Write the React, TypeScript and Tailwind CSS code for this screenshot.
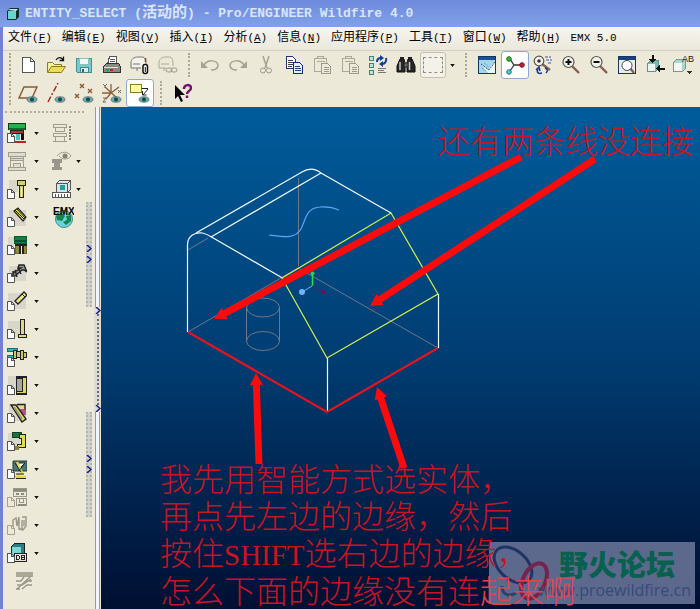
import React from 'react';

interface MenuItem {
  label: string;
  hotkey?: string;
}

interface Tool {
  name: string;
  icon: React.ReactNode;
  active?: boolean;
}

interface PartTool {
  name: string;
  icon: React.ReactNode;
  menu?: boolean;
  side?: Tool & { menu?: boolean };
}

const menus: MenuItem[] = [
  { label: '文件', hotkey: 'F' },
  { label: '编辑', hotkey: 'E' },
  { label: '视图', hotkey: 'V' },
  { label: '插入', hotkey: 'I' },
  { label: '分析', hotkey: 'A' },
  { label: '信息', hotkey: 'N' },
  { label: '应用程序', hotkey: 'P' },
  { label: '工具', hotkey: 'T' },
  { label: '窗口', hotkey: 'W' },
  { label: '帮助', hotkey: 'H' },
  { label: 'EMX 5.0' },
];

const Icon: React.FC<{ children: React.ReactNode; smooth?: boolean }> = ({ children, smooth }) => (
  <svg
    viewBox="0 0 20 20"
    className="w-5 h-5 shrink-0"
    fill="none"
    stroke="#222"
    shapeRendering={smooth ? 'auto' : 'crispEdges'}
  >
    {children}
  </svg>
);

// Little page in the lower left corner of most part tools
const Doc: React.FC<{ gray?: boolean }> = ({ gray }) => (
  <path d="M.5 10.5h4l3 3v6h-7zM4.5 10.5v3h3" fill={gray ? '#ece9d8' : '#fff'} stroke={gray ? '#a5a394' : '#555'} />
);

const Eye = () => (
  <g shapeRendering="auto">
    <ellipse cx="14" cy="16.5" rx="5" ry="2.8" fill="#74a8a4" stroke="#456" strokeWidth=".6" />
    <circle cx="14" cy="16.5" r="2" fill="#064c50" stroke="none" />
  </g>
);

const Magnifier: React.FC<{ sign: string }> = ({ sign }) => (
  <Icon smooth>
    <path d="M11 11l7 7" stroke="#8a5f52" strokeWidth="2.4" />
    <circle cx="7.5" cy="7" r="5.5" fill="#f4f3ea" stroke="#555" strokeWidth="1.2" />
    <path d={sign} stroke="#111" strokeWidth="2" />
  </Icon>
);

const Paste = () => (
  <Icon>
    <path d="M2.5 3.5h12v13h-12zM5.5 3.5v-2h6v2zM4.5 6.5h8" stroke="#aaa899" />
    <path d="M9.5 8.5h6l3 3v7h-9zM11.5 12.5h5M11.5 14.5h5M11.5 16.5h5" fill="#ece9d8" stroke="#9c9a8c" />
  </Icon>
);

const fileTools: Tool[] = [
  {
    name: '新建',
    icon: <Icon><path d="M4.5 2.5h8l4 4v11h-12zM12.5 2.5v4h4" fill="#fff" stroke="#555" /></Icon>,
  },
  {
    name: '打开',
    icon: (
      <Icon smooth>
        <path d="M1.5 17V7.5h5l2 2h7V12" fill="#f5ef9a" stroke="#8a7c20" />
        <path d="M1.5 17.5l4-6h14l-4 6z" fill="#ecdc58" stroke="#8a7c20" />
        <path d="M10 5c2-3 5-3 7-.5M17.5 1.5v4h-4" stroke="#111" strokeWidth="1.3" />
      </Icon>
    ),
  },
  {
    name: '保存',
    icon: (
      <Icon>
        <path d="M2.5 3.5h15v14h-14l-1-1z" fill="#6fd0ca" stroke="#4a8f92" />
        <path d="M5.5 3.5h9v6h-9z" fill="#eefaf6" stroke="#8fbfbb" />
        <path d="M6.5 12.5h8v5h-8z" fill="#dcece8" stroke="#4c8589" />
        <path d="M8.5 14v3" stroke="#35666a" strokeWidth="2" />
      </Icon>
    ),
  },
  {
    name: '打印',
    icon: (
      <Icon>
        <path d="M5.5 9.5l2-8h7v8M8 4.5h5M8 6.5h5" fill="#fff" stroke="#555" />
        <path d="M1.5 11.5l3-3h12l2 3v6h-17z" fill="#8a8a82" stroke="#333" />
        <path d="M2 12.5h14" stroke="#ddd" />
        <path d="M4 15h3" stroke="#1c9c54" strokeWidth="2" />
        <path d="M8 15h3" stroke="#b42828" strokeWidth="2" />
      </Icon>
    ),
  },
  {
    name: '发送',
    icon: (
      <Icon smooth>
        <path d="M1 13V8c0-4 3-6 7-6h4c3 0 4 3 4 6v3" fill="#f4f3ea" stroke="#777" />
        <path d="M1 13h10M3 9h7M7 13v3" stroke="#777" />
        <path d="M15.5 3v4" stroke="#b03030" strokeWidth="1.5" />
        <rect x="13" y="9.5" width="4.5" height="9" rx="2" fill="#fff" stroke="#111" strokeWidth="1.5" />
        <path d="M15.3 12v5" stroke="#111" />
      </Icon>
    ),
  },
  {
    name: '链接',
    icon: (
      <Icon smooth>
        <path d="M1 13V8c0-4 3-6 7-6h3c3 0 4 3 4 6v3M1 13h7M3 9h8M6 13v3" stroke="#aaa899" />
        <rect x="8" y="13" width="6" height="4" rx="2" stroke="#9c9a8c" />
        <rect x="13" y="13" width="6" height="4" rx="2" stroke="#9c9a8c" />
      </Icon>
    ),
  },
];

const editTools: Tool[] = [
  {
    name: '撤消',
    icon: (
      <Icon smooth>
        <path d="M1 6v7h7z" fill="#a5a394" stroke="none" />
        <path d="M4 10c4-6 13-5 14 0 0 4-3 5-7 5" stroke="#a5a394" strokeWidth="1.5" />
      </Icon>
    ),
  },
  {
    name: '重做',
    icon: (
      <Icon smooth>
        <path d="M19 6v7h-7z" fill="#a5a394" stroke="none" />
        <path d="M16 10C12 4 3 5 2 10c0 4 3 5 7 5" stroke="#a5a394" strokeWidth="1.5" />
      </Icon>
    ),
  },
  {
    name: '剪切',
    icon: (
      <Icon smooth>
        <path d="M7 1l4 12M13 1L9 13" stroke="#a5a394" strokeWidth="1.5" />
        <circle cx="7" cy="15.5" r="2.5" stroke="#9c9a8c" />
        <circle cx="13" cy="15.5" r="2.5" stroke="#9c9a8c" />
      </Icon>
    ),
  },
  {
    name: '复制',
    icon: (
      <Icon>
        <path d="M2.5 1.5h6l3 3v9h-9z" fill="#fff" stroke="#26346a" />
        <path d="M4 5.5h5M4 7.5h5M4 9.5h5M4 11.5h4" stroke="#444" />
        <path d="M9.5 7.5h6l3 3v8h-9z" fill="#e5f0ff" stroke="#102c80" />
        <path d="M11 11.5h5M11 13.5h6M11 15.5h6" stroke="#26427c" />
      </Icon>
    ),
  },
  { name: '粘贴', icon: <Paste /> },
  { name: '选择性粘贴', icon: <Paste /> },
  {
    name: '再生',
    icon: (
      <Icon>
        <path d="M1.5 1.5h4v4h-4zM1.5 8.5h4v4h-4zM1.5 15.5h4v4h-4z" fill="#b9e5df" stroke="#3b8582" />
        <path d="M10 13.5h8M10 15.5h6M10 17.5h8" stroke="#777" />
        <g shapeRendering="auto" stroke="#123f94" strokeWidth="2">
          <path d="M9 7c0-3 2-4 4-4M18 3c1 3-1 6-4 6" />
          <path d="M12 0l4 3-4 3zM15 6l-4 3 4 3z" fill="#123f94" strokeWidth="0" />
        </g>
      </Icon>
    ),
  },
  {
    name: '查找',
    icon: (
      <Icon smooth>
        <path d="M4 4h4l1 4v9H1v-6zM12 4h4l3 7v6h-8V8z" fill="#272727" stroke="#111" />
        <path d="M8 8h4v4H8z" fill="#666" />
        <path d="M4 7v8M13.5 7v8" stroke="#c9c9c9" strokeWidth="1.5" />
        <path d="M4 3h4M12 3h4" strokeWidth="2" />
      </Icon>
    ),
  },
];

const viewTools: Tool[] = [
  {
    name: '重画',
    icon: (
      <Icon>
        <path d="M1.5 1.5h17v17h-17z" fill="#a5d3f0" stroke="#173364" />
        <path d="M2 3.5h16" stroke="#1b4fa3" strokeWidth="3" />
        <path d="M4 9l7 6 7-9v12H11z" fill="#eef8fb" stroke="none" />
        <g shapeRendering="auto">
          <path d="M4 9l8 6 6-8" stroke="#33566c" strokeDasharray="2 1" />
          <path d="M7 8l5 4M5 13l4 3" stroke="#5d8aa5" strokeDasharray="1 1" />
        </g>
      </Icon>
    ),
  },
  {
    name: '旋转中心',
    active: true,
    icon: (
      <Icon smooth>
        <path d="M5 4l4 6h8M9 10l-4 6" stroke="#333" strokeWidth="1.3" />
        <circle cx="4" cy="4" r="2.3" fill="#32bd31" stroke="#176b20" />
        <circle cx="17" cy="10" r="2.3" fill="#c51b38" stroke="#781626" />
        <circle cx="4" cy="17" r="2.3" fill="#42d3db" stroke="#21747f" />
      </Icon>
    ),
  },
  {
    name: '定向模式',
    icon: (
      <Icon smooth>
        <path d="M9 9l8 6" stroke="#80645c" strokeWidth="2.5" />
        <circle cx="6" cy="6" r="4.8" fill="#f5f3e9" stroke="#555" strokeWidth="1.2" />
        <circle cx="6" cy="6" r="1.8" fill="#333" stroke="none" />
        <path d="M12 2h6M13 5h6M15 8h4" stroke="#3d55a2" strokeDasharray="3 1" />
        <path d="M5 14c-2 4 1 5 4 4M3 15l3-3 1 4M12 13c3 1 3 3 1 5" stroke="#183d92" strokeWidth="1.5" />
      </Icon>
    ),
  },
  { name: '放大', icon: <Magnifier sign="M4.500 7h6M7.500 4v6" /> },
  { name: '缩小', icon: <Magnifier sign="M4.500 7h6" /> },
  {
    name: '重新调整',
    icon: (
      <Icon>
        <path d="M1.5 1.5h17v17h-17z" fill="#e8edf0" stroke="#173364" />
        <path d="M2 3h16" stroke="#173f85" strokeWidth="3" />
        <g shapeRendering="auto">
          <path d="M13 13l4 5" stroke="#805b50" strokeWidth="2.2" />
          <circle cx="10" cy="10.5" r="5" fill="#fff" stroke="#444" />
        </g>
      </Icon>
    ),
  },
  {
    name: '重定向',
    icon: (
      <Icon>
        <path d="M2.5 8.5l3-3h8v8l-3 3h-8z" fill="#70bdb4" stroke="#678f8b" />
        <path d="M3 9h7v7H3z" fill="#eaf5ef" stroke="none" />
        <path d="M7.5 0v6M20 13.5h-6" strokeWidth="2" stroke="#111" />
        <path d="M4 4h7l-3.500 4zM15 10v7l-4-3.500z" fill="#111" stroke="none" />
      </Icon>
    ),
  },
  {
    name: '已命名的视图列表',
    icon: (
      <svg viewBox="0 0 22 20" className="w-[22px] h-5 shrink-0" fill="none" shapeRendering="crispEdges">
        <path d="M1.5 7.500l3-3h9v9l-3 3h-9z" fill="#a9d6cf" stroke="#7b9492" />
        <path d="M2 8h8v8H2z" fill="#f4f6ef" />
        <text x="10" y="7" fontSize="9" fill="#222" className="font-['Liberation_Sans']">AB</text>
        <path d="M15 16h5l-2.500 3z" fill="#333" />
      </svg>
    ),
  },
];

const datumTools: Tool[] = [
  {
    name: '基准平面',
    icon: <Icon smooth><path d="M1 15L6 4h13l-5 11z" stroke="#8b5b34" strokeWidth="1.5" /><Eye /></Icon>,
  },
  {
    name: '基准轴',
    icon: <Icon smooth><path d="M2 19L12 0" stroke="#a23024" strokeWidth="1.5" strokeDasharray="6 2 2 2" /><Eye /></Icon>,
  },
  {
    name: '基准点',
    icon: (
      <Icon smooth>
        <path d="M6 1l4 4m0-4L6 5M14 6l4 4m0-4l-4 4M1 11l4 4m0-4l-4 4" stroke="#8b5b34" strokeWidth="1.4" />
        <Eye />
      </Icon>
    ),
  },
  {
    name: '坐标系',
    icon: (
      <Icon smooth>
        <path d="M9 10V1M9 10H0M9 10l8-6M3 4l12 11M4 16l5-6" stroke="#8b6038" strokeWidth="1.3" />
        <path d="M1 1l2 2 2-2M3 3v2M16 7l3 3m0-3l-3 3M1 15h3l-3 4h3" stroke="#666" />
        <Eye />
      </Icon>
    ),
  },
  {
    name: '注释显示',
    active: true,
    icon: (
      <Icon>
        <path d="M.5 1.500h11v8H.5z" fill="#ffff9d" stroke="#877d21" />
        <path d="M12 5.500h6" stroke="#222" />
        <path d="M18 6l-5 6M12.500 8v4h4" stroke="#222" shapeRendering="auto" />
        <Eye />
      </Icon>
    ),
  },
];

const Mold: React.FC<{ gray?: boolean }> = ({ gray }) =>
  gray ? (
    <Icon>
      <path d="M1.5 1.500h17v4h-17zM3.500 5.500h13v4h-13zM3.500 9.500v7M16.500 9.500v7M6.500 12.500h7v4h-7zM1.500 16.500h17v3h-17z" fill="#dedccf" stroke="#a09e90" />
      <path d="M3 7.500h14" stroke="#a09e90" />
    </Icon>
  ) : (
    <Icon>
      <path d="M1.5.5h17v6h-17z" fill="#22b14c" stroke="#123d1c" />
      <path d="M2 5.500h16" stroke="#0b6b34" strokeWidth="2" />
      <path d="M3.500 7.500h13v3h-13z" fill="#b8352e" stroke="#222" />
      <path d="M9 11h4v6H9z" fill="#45c4c4" stroke="none" />
      <path d="M14 11h3v6h-3z" fill="#111" stroke="none" />
      <path d="M7 18.500h12" stroke="#b02a29" strokeWidth="2" />
      <Doc />
    </Icon>
  );

const partTools: PartTool[] = [
  {
    name: '模架装配',
    menu: true,
    icon: <Mold />,
    side: {
      name: '模架开合',
      icon: (
        <Icon>
          <path d="M1.5 1.500h13v3h-13zM3.500 5v3h9v-3M1.500 10.500h13v3h-13zM3.500 14v4h9v-4M1 18.500h14" stroke="#a09e90" />
          <path d="M17.500 3v14" stroke="#88867b" strokeWidth="2" strokeDasharray="2 1" />
        </Icon>
      ),
    },
  },
  {
    name: '模架定义',
    menu: true,
    icon: <Mold gray />,
    side: {
      name: '显示状态',
      menu: true,
      icon: (
        <Icon smooth>
          <path d="M5 5c4-5 11-5 14 0-3 4-9 4-12 0" stroke="#a09e90" />
          <circle cx="13" cy="5" r="2.500" fill="#858477" stroke="none" />
          <path d="M0 8h10v4H8v4h2v3H0v-3h2v-4H0z" fill="#99978a" stroke="none" />
        </Icon>
      ),
    },
  },
  {
    name: '螺钉',
    menu: true,
    icon: (
      <Icon>
        <path d="M2 1h9v12H2z" fill="#d8d6ca" stroke="none" />
        <path d="M10.500 1.500h8v5h-8zM12.500 6.500h4v12h-4z" fill="#d5cf70" />
        <path d="M14.500 8v10" stroke="#fff27b" />
        <Doc />
      </Icon>
    ),
    side: {
      name: '测量',
      menu: true,
      icon: (
        <Icon>
          <path d="M4.500 4.500l3-3h11v9l-3 3h-11zM4.500 4.500h11v9M15.500 4.500l3-3" fill="#d7e4e0" stroke="#555" />
          <path d="M8 6h5v5H8z" fill="#279b9f" stroke="none" />
          <path d="M.5 13.500h18v5H.5zM3.500 15v3M6.500 15v3M9.500 15v3M12.500 15v3M15.500 15v3" fill="#fff" stroke="#555" />
        </Icon>
      ),
    },
  },
  {
    name: '销钉',
    menu: true,
    icon: (
      <Icon smooth>
        <path d="M2 3h17v16H2z" fill="#d8d6ca" stroke="none" />
        <path d="M7 4l4-3 8 9-3 4z" fill="#e6dd62" strokeWidth="1.2" />
        <path d="M8 3l9 9M10 2l8 9" />
        <Doc />
      </Icon>
    ),
    side: {
      name: 'EMX',
      icon: (
        <svg viewBox="0 0 22 22" className="w-[22px] h-[22px] shrink-0">
          <circle cx="12" cy="13" r="8.500" fill="#69d4d6" stroke="#42898f" />
          <path d="M4 10l5-3 4 3-3 5-5-1zM14 10l5-1v6l-5 4-3-3 4-2z" fill="#168451" />
          <text x="1" y="9" fontSize="10" fontWeight="bold" textAnchor="start" className="font-['Liberation_Sans']">EMX</text>
        </svg>
      ),
    },
  },
  {
    name: '导柱',
    menu: true,
    icon: (
      <Icon>
        <path d="M1 2h6v10H1z" fill="#d8d6ca" stroke="none" />
        <path d="M7.500 1.500h12v7h-12z" fill="#12804b" stroke="#0f5a2a" />
        <path d="M8 6h11" stroke="#0b4c2c" strokeWidth="2" />
        <path d="M8.500 9.500h4v9h-4zM15.500 9.500h4v9h-4z" fill="#8f8940" stroke="#6b6630" />
        <path d="M8 9.500h12M13 10v9M15.500 10v9" strokeWidth="2" />
        <Doc />
      </Icon>
    ),
  },
  {
    name: '螺纹',
    menu: true,
    icon: (
      <Icon smooth>
        <path d="M2 3h17v15H2z" fill="#d8d6ca" stroke="none" />
        <path d="M12 2l5 0 3 7-3-2-2 0-7 6-3 1 1-4 8-5-3 0zM8 7l2 7M11 5l3 6M6 8l1 8" fill="#9a9a94" strokeWidth="1.400" />
        <Doc />
      </Icon>
    ),
  },
  {
    name: '圆销',
    menu: true,
    icon: (
      <Icon smooth>
        <path d="M1 2h18v16H1z" fill="#d8d6ca" stroke="none" />
        <path d="M8 10l9-9 3 3-9 9z" fill="#ece98a" strokeWidth="1.400" />
        <path d="M15 3l3 3" />
        <Doc />
      </Icon>
    ),
  },
  {
    name: '顶杆',
    menu: true,
    icon: (
      <Icon>
        <path d="M1 2h12v16H1z" fill="#d8d6ca" stroke="none" />
        <path d="M13.500.5h4v15h-4zM11.500 15.500h8v3h-8z" fill="#ded97c" />
        <Doc />
      </Icon>
    ),
  },
  {
    name: '冷却',
    menu: true,
    icon: (
      <Icon>
        <path d="M.5 1.500h10v3H.5zM.5 8.500h8v3H.5z" fill="#34b5b5" stroke="#177071" />
        <path d="M6.500 3.500h3v8h-3zM9.500 4.500h4v6h-4zM13.500 3.500h3v9h-3zM16.500 5.500h3v5h-3z" fill="#cac66b" />
        <Doc />
      </Icon>
    ),
  },
  {
    name: '衬套',
    menu: true,
    icon: (
      <Icon>
        <path d="M1 1h8v12H1z" fill="#d8d6ca" stroke="none" />
        <path d="M9.500 1.500h10v17h-10z" fill="#ded967" />
        <path d="M9.500 3.500h6v13h-6z" fill="#aaa9a0" />
        <path d="M9 1.500h11M9 18.500h11" strokeWidth="2" />
        <Doc />
      </Icon>
    ),
  },
  {
    name: '斜导柱',
    menu: true,
    icon: (
      <Icon smooth>
        <path d="M2 2h17v16H2z" fill="#d8d6ca" stroke="none" />
        <path d="M13 6h6v6h-6z" fill="#ba5288" stroke="none" />
        <path d="M4 2h5l10 14-4 3zM10 1.500h8v5" fill="#e5dc65" strokeWidth="1.400" />
        <path d="M7 4l8 12" stroke="#9a9a70" strokeWidth="2" />
        <Doc />
      </Icon>
    ),
  },
  {
    name: '滑块',
    menu: true,
    icon: (
      <Icon>
        <path d="M1 2h12v16H1z" fill="#d8d6ca" stroke="none" />
        <path d="M5.500 1.500h9v5h-9z" fill="#117546" stroke="#163e29" />
        <path d="M12.500 3.500h6v13h-8v-3h4v-6h-2z" fill="#e4dc50" />
        <path d="M7 15h5v4H7z" fill="#88823d" stroke="none" />
        <Doc />
      </Icon>
    ),
  },
  {
    name: '斜顶',
    menu: true,
    icon: (
      <Icon smooth>
        <path d="M6 2h14v10H6z" fill="#4b7772" stroke="#253e3d" />
        <path d="M9 4h9l-6 6z" fill="#fff" />
        <path d="M10 3l5 11-5 2M8 18h11" stroke="#e3d94d" strokeWidth="2.500" />
        <path d="M8 4l6 9M17 5l-5 7M9 15h8M9 19.500h10" />
        <Doc />
      </Icon>
    ),
  },
  {
    name: '热流道',
    menu: true,
    icon: (
      <Icon>
        <path d="M6.500 1.500h13v8h-13zM9.500 11.500h10v7h-10zM7 4.500h12M12.500 12v3h4v-3" stroke="#99978a" />
        <path d="M9 7h3M14 7h3M7 2.500h12M11 17.500h8" stroke="#8d8b7e" strokeWidth="2" />
        <Doc gray />
      </Icon>
    ),
  },
  {
    name: '弹簧',
    menu: true,
    icon: (
      <Icon smooth>
        <path d="M6 12V5l3-2 1 8 2-9M12 3v11h3V5M15 2h4v9l-3 4-4-1M17 5v6" stroke="#99978a" strokeWidth="1.400" />
        <Doc gray />
      </Icon>
    ),
  },
  {
    name: '元件库',
    menu: true,
    icon: (
      <Icon>
        <path d="M4.500 3.500l3-3h10v10l-3 3h-10z" fill="#287f81" />
        <path d="M5 4h9v9H5z" fill="#77d8d5" stroke="none" />
        <path d="M7.500 10.500h12v8h-12z" fill="#e8e6d9" />
        <path d="M9.500 12.500h2l1 1v2l-1 1h-2zM14.500 12.500h3v4h-3zM14.500 14.500h3" />
        <Doc />
      </Icon>
    ),
  },
  {
    name: '材料清单',
    icon: (
      <Icon smooth>
        <path d="M2 1h17v5H2z" fill="#aaa899" stroke="none" />
        <path d="M3 18L17 5M2 10h5l3-4M3 14h5l9-6M8 18l5-4h5M12 10h6M2 18h4" stroke="#99978a" strokeWidth="1.300" />
      </Icon>
    ),
  },
];

const Caret = () => (
  <svg viewBox="0 0 6 4" className="w-[5px] h-[3px] shrink-0" fill="#111">
    <path d="M0 0h6L3 4z" />
  </svg>
);

const Grip = () => <div className="w-[2px] h-6 mx-[6px] shrink-0 border-l-2 border-dotted border-[#aaa899]" />;

const ToolButton: React.FC<{ tool: Tool }> = ({ tool }) => (
  <button
    aria-label={tool.name}
    className={`w-7 h-7 shrink-0 flex items-center justify-center rounded-[3px] border ${
      tool.active ? 'bg-white border-[#8fa9cc]' : 'border-transparent'
    }`}
  >
    {tool.icon}
  </button>
);

const Chevron = () => (
  <svg viewBox="0 0 6 7" className="w-[6px] h-[7px] shrink-0" fill="none" stroke="#1a1a8c" strokeWidth="1.5">
    <path d="M1 0l4 3.500L1 7" />
  </svg>
);

const DrawerHandle = () => (
  <div className="h-[105px] w-[6px] bg-[#d4d2c7] border-x-2 border-dotted border-[#b4b3b6] flex flex-col items-center gap-1 pt-[43px]">
    <Chevron />
    <Chevron />
  </div>
);

interface ArrowProps {
  from: [number, number];
  to: [number, number];
}

const Arrow: React.FC<ArrowProps> = ({ from, to }) => {
  const dx = to[0] - from[0];
  const dy = to[1] - from[1];
  const len = Math.hypot(dx, dy);
  const angle = (Math.atan2(dy, dx) * 180) / Math.PI;
  return (
    <g transform={`translate(${from[0]} ${from[1]}) rotate(${angle})`}>
      <path d={`M0 -3.500H${len - 12}V-6.500L${len} 0L${len - 12} 6.500V3.500H0z`} fill="#fb0b0b" />
    </g>
  );
};

const Model = () => (
  <svg viewBox="101 107 599 502" className="absolute left-0 top-0 w-[599px] h-[502px]" fill="none">
    <g stroke="#6d7786">
      <path d="M298.500 178v88M188 332l110-64 140 80M188 250l20-12" />
      <ellipse cx="263" cy="307.500" rx="16.500" ry="9.500" />
      <ellipse cx="263" cy="341" rx="16.500" ry="9.500" />
      <path d="M246.500 307v34M279.500 307v34" />
    </g>
    <g stroke="#f1fbff" strokeWidth="1.200">
      <path d="M187.500 332v-87c0-9 7-13 15-12 4 1 6 2 9 4l71 41" />
      <path d="M196 233l106-61q10-6 19 1l70 40M211 237l110-64" />
      <path d="M327.500 358v53M438.500 294v54" />
    </g>
    <path d="M282 278l109-65 47 81-111 64z" stroke="#d4f34a" strokeWidth="1.200" />
    <path d="M188 332l139 80 111-64" stroke="#e0151f" strokeWidth="2.200" />
    <path d="M269 235c16 2 26 4 32-6 5-10 5-21 19-22q10-1 19 3" stroke="#58a8f5" strokeWidth="1.200" />
    <path d="M312.500 274v12" stroke="#28dc58" strokeWidth="1.500" />
    <path d="M312 286l-10 6" stroke="#68b0ff" />
    <path d="M312 286l11 6" stroke="#4c2366" />
    <circle cx="312.500" cy="273.500" r="2" fill="#25d34b" />
    <circle cx="302" cy="292" r="3" fill="#6fb3fb" />
    <circle cx="323" cy="292" r="2" fill="#860844" />
    <Arrow from={[521, 157]} to={[214, 319]} />
    <Arrow from={[595, 159]} to={[370, 306]} />
    <Arrow from={[259, 464]} to={[256, 373]} />
    <Arrow from={[404, 468]} to={[377, 387]} />
  </svg>
);

const Watermark = () => (
  <div className="absolute left-[388px] top-[435px] w-[206px] h-[62px] bg-[#5c698c] font-normal">
    <svg viewBox="0 0 206 62" className="absolute inset-0 w-full h-full" fill="none">
      <ellipse cx="24" cy="23" rx="22" ry="14" transform="rotate(42 24 23)" stroke="#1c3566" strokeWidth="3" />
      <ellipse cx="45" cy="39" rx="19" ry="11" transform="rotate(-64 45 39)" stroke="#76244e" strokeWidth="4" />
      <path d="M13 44c0 9 7 11 14 7" stroke="#234568" strokeWidth="3" />
    </svg>
    <div className="relative pl-[70px] pt-1 font-['Noto_Sans_CJK_SC',sans-serif]">
      <div className="text-[29px] leading-[34px] font-black text-[#08604f] whitespace-nowrap">野火论坛</div>
    </div>
    <div className="relative pr-1 text-right text-[16px] leading-5 text-[#364a78] font-['Open_Sans',sans-serif]">
      www.proewildfire.cn
    </div>
  </div>
);

const App: React.FC = () => {
  return (
    <div className="min-h-screen flex flex-col bg-[#ece9d8] border-l-[3px] border-[#7380d5] text-black font-['Liberation_Mono','Noto_Sans_CJK_SC',monospace]">
      <header className="h-[27px] -ml-[3px] pl-[7px] flex items-center gap-[6px] bg-gradient-to-b from-[#6d8bdc] via-[#7895e2] to-[#80a2e9]">
        <svg viewBox="0 0 12 12" className="w-3 h-3 shrink-0">
          <path d="M0 3l3-3h9v9l-3 3H0z" fill="#102c30" />
          <path d="M1 3h8v8H1z" fill="#69d6ce" />
          <path d="M1 2l2-1h8L9 3z" fill="#c4efe9" />
        </svg>
        <h1 className="text-[13px] leading-4 font-bold text-[#d9e5ff] whitespace-pre">
          ENTITY_SELECT (<span className="text-[15px]">活动的</span>) - Pro/ENGINEER Wildfire 4.0
        </h1>
      </header>

      <nav className="h-6 pl-[5px] pb-[2px] flex items-center gap-[10px] bg-gradient-to-b from-[#f6f5ef] to-[#ebe8db] border-b border-[#d2cfbf]">
        {menus.map((item) => (
          <button key={item.label} className="flex items-center whitespace-pre text-[11px] leading-4">
            {item.hotkey ? (
              <>
                <span className="text-[12px]">{item.label}</span>
                <span>(<u>{item.hotkey}</u>)</span>
              </>
            ) : (
              item.label
            )}
          </button>
        ))}
      </nav>

      <div className="flex items-center h-7 overflow-hidden">
        <Grip />
        <div className="flex -ml-[3px]">{fileTools.map((tool) => <ToolButton key={tool.name} tool={tool} />)}</div>
        <Grip />
        <div className="flex">{editTools.map((tool) => <ToolButton key={tool.name} tool={tool} />)}</div>
        <button aria-label="选取过滤器" className="flex items-center gap-1 pr-1 shrink-0">
          <span className="w-[26px] h-[26px] flex items-center justify-center rounded-[3px] border border-[#c5c1b2] bg-[#f3f1e8]">
            <span className="w-5 h-4 border border-dashed border-[#908e82]" />
          </span>
          <Caret />
        </button>
        <Grip />
        <div className="flex">{viewTools.map((tool) => <ToolButton key={tool.name} tool={tool} />)}</div>
      </div>
      <div className="flex items-center h-7">
        <Grip />
        <div className="flex -ml-[3px]">{datumTools.map((tool) => <ToolButton key={tool.name} tool={tool} />)}</div>
        <Grip />
        <button aria-label="这是什么" className="w-7 h-7 flex items-center justify-center">
          <svg viewBox="0 0 20 20" className="w-5 h-5">
            <path d="M3 2v14l3-3 3 6 2-1-3-6h5z" fill="#000" />
            <path d="M12 6c0-5 7-5 7-1 0 3-4 3-4 6M15 12.500v2.500" fill="none" stroke="#731170" strokeWidth="2.500" />
          </svg>
        </button>
      </div>

      <div className="flex-1 flex">
        <aside className="flex shrink-0">
          <div className="w-[81px]">
            <div className="ml-[2px] mt-1 mb-[6px] border-t-2 border-dotted border-[#b3b0a1]" />
            {partTools.map((tool) => (
              <div key={tool.name} className="h-7 pl-1 flex items-center">
                <button
                  aria-label={tool.name}
                  className={`w-[43px] h-7 shrink-0 flex items-center gap-[7px] ${tool.menu ? '' : 'pl-[7px]'}`}
                >
                  {tool.icon}
                  {tool.menu && <Caret />}
                </button>
                {tool.side && (
                  <button aria-label={tool.side.name} className="h-7 pl-[2px] flex items-center gap-1">
                    {tool.side.icon}
                    {tool.side.menu && <Caret />}
                  </button>
                )}
              </div>
            ))}
          </div>
          <div className="w-[10px] pt-[95px] flex flex-col items-center gap-[105px]">
            <DrawerHandle />
            <DrawerHandle />
          </div>
          <div className="w-[7px] flex flex-col items-center">
            <div className="h-[200px] w-[5px] bg-[#f2f5ff] border-x border-[#8797cf]" />
            <div className="h-[105px] w-[7px] bg-[#dedcd2] flex flex-col items-center justify-between">
              <Chevron />
              <div className="flex-1 border-l-2 border-dotted border-[#66667c]" />
              <Chevron />
            </div>
            <div className="flex-1 w-[5px] bg-[#f2f5ff] border-x border-[#8797cf]" />
          </div>
        </aside>

        <main className="relative flex-1 min-h-[502px] overflow-hidden bg-gradient-to-b from-[#005c9b] via-[#003d72] to-[#000f32] text-[#c91424] font-light font-['Liberation_Serif','Noto_Sans_CJK_SC',serif]">
          <Watermark />
          <p className="absolute left-[337px] top-[17px] text-[32px] leading-[37px] whitespace-nowrap">还有两条线没连接</p>
          <p className="absolute left-[59px] top-[355px] text-[32px] leading-[37px] whitespace-nowrap">
            我先用智能方式选实体，
            <br />
            再点先左边的边缘，然后
            <br />
            按住<span className="text-[29px]">SHIFT</span>选右边的边缘，
            <br />
            怎么下面的边缘没有连<span className="text-[#e0454f]">起来啊</span>
          </p>
          <Model />
        </main>
      </div>
    </div>
  );
};

export default App;
